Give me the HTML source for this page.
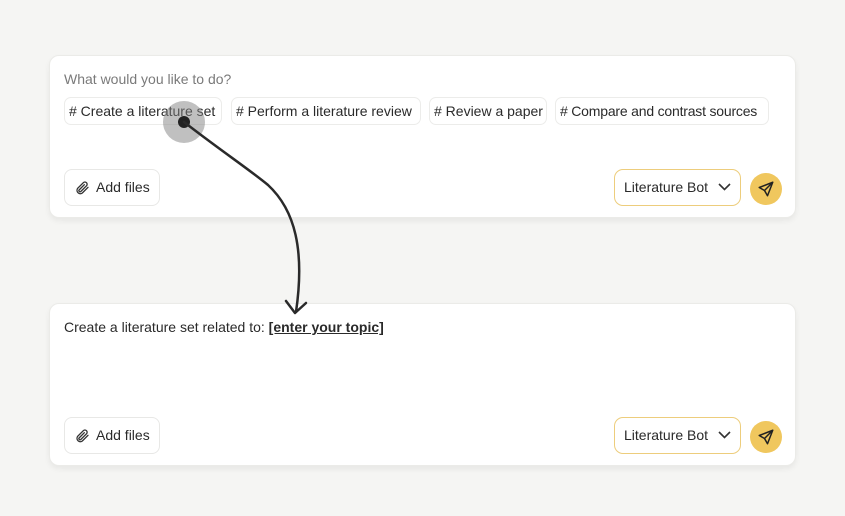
<!DOCTYPE html><html><head><style>
*{box-sizing:border-box;margin:0;padding:0}
body{width:845px;height:516px;background:#f5f5f3;font-family:"Liberation Sans",sans-serif;position:relative;overflow:hidden;color:#2a2a2a}
.card{position:absolute;left:49px;width:747px;height:163px;background:#fff;border:1px solid #ebebe8;border-radius:10px;box-shadow:0 3px 6px rgba(0,0,0,.06)}
.chip{position:absolute;top:41px;height:28px;border:1px solid #ececea;border-radius:7px;font-size:14px;line-height:26px;padding-left:4px;white-space:nowrap}
.btn{position:absolute;left:14px;top:113px;width:96px;height:37px;border:1px solid #e8e8e6;border-radius:8px;font-size:14px;line-height:35px;padding-left:31px}
.sel{position:absolute;left:564px;top:113px;width:127px;height:37px;border:1.5px solid #edcd7c;border-radius:9px;font-size:14px;line-height:34px;padding-left:9px}
.send{position:absolute;left:700px;top:117px;width:32px;height:32px;border-radius:50%;background:#f0c75e}
</style></head><body>
<div class="card" style="top:55px">
<div style="position:absolute;left:14px;top:15px;font-size:14px;color:#7a7a7a">What would you like to do?</div>
<div class="chip" style="left:14px;width:158px"># Create a literature set</div>
<div class="chip" style="left:181px;width:190px"># Perform a literature review</div>
<div class="chip" style="left:379px;width:118px"># Review a paper</div>
<div class="chip" style="left:505px;width:214px;letter-spacing:-0.2px"># Compare and contrast sources</div>
<div class="btn"><svg style="position:absolute;left:9px;top:10px" width="16" height="16" viewBox="0 0 24 24" fill="none" stroke="#333" stroke-width="2" stroke-linecap="round"><path d="M21 11l-8.5 8.5a5 5 0 01-7-7L14 4a3.3 3.3 0 014.7 4.7L10.2 17.2a1.7 1.7 0 01-2.4-2.4L15.5 7"/></svg>Add files</div>
<div class="sel">Literature Bot<svg style="position:absolute;right:9px;top:13px" width="13" height="8" viewBox="0 0 13 8" fill="none" stroke="#333" stroke-width="1.6"><path d="M1 1l5.5 5.5L12 1"/></svg></div>
<div class="send"><svg style="position:absolute;left:7px;top:7px" width="18" height="18" viewBox="0 0 24 24" fill="none" stroke="#222" stroke-width="2" stroke-linejoin="round"><path d="M21 3L3 10l7 4 4 7zM21 3L10 14"/></svg></div>
</div>
<div class="card" style="top:303px">
<div style="position:absolute;left:14px;top:15px;font-size:14px">Create a literature set related to: <b style="text-decoration:underline;font-weight:600">[enter your topic]</b></div>
<div class="btn"><svg style="position:absolute;left:9px;top:10px" width="16" height="16" viewBox="0 0 24 24" fill="none" stroke="#333" stroke-width="2" stroke-linecap="round"><path d="M21 11l-8.5 8.5a5 5 0 01-7-7L14 4a3.3 3.3 0 014.7 4.7L10.2 17.2a1.7 1.7 0 01-2.4-2.4L15.5 7"/></svg>Add files</div>
<div class="sel">Literature Bot<svg style="position:absolute;right:9px;top:13px" width="13" height="8" viewBox="0 0 13 8" fill="none" stroke="#333" stroke-width="1.6"><path d="M1 1l5.5 5.5L12 1"/></svg></div>
<div class="send"><svg style="position:absolute;left:7px;top:7px" width="18" height="18" viewBox="0 0 24 24" fill="none" stroke="#222" stroke-width="2" stroke-linejoin="round"><path d="M21 3L3 10l7 4 4 7zM21 3L10 14"/></svg></div>
</div>
<svg style="position:absolute;left:0;top:0" width="845" height="516">
<circle cx="184" cy="122" r="21" fill="rgba(130,130,130,.5)"/>
<circle cx="184" cy="122" r="6" fill="#222"/>
<path d="M184 122 C220 150 250 170 268 185 C295 210 305 250 296 312" fill="none" stroke="#2a2a2a" stroke-width="2.5" stroke-linecap="round"/>
<path d="M286 301 L295 313 L306 303" fill="none" stroke="#2a2a2a" stroke-width="2.5" stroke-linecap="round" stroke-linejoin="round"/>
</svg>
</body></html>
